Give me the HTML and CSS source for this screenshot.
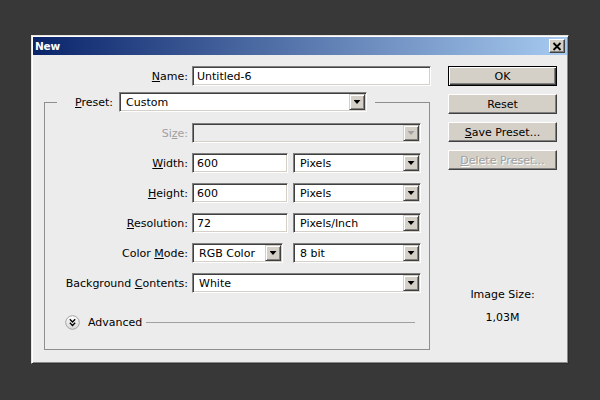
FILE: index.html
```html
<!DOCTYPE html>
<html>
<head>
<meta charset="utf-8">
<link rel="stylesheet" href="styles.css">
</head>
<body>
<div class="dialog">
  <div class="titlebar">
    <span class="title">New</span>
    <span class="close"><svg width="10" height="9" viewBox="0 0 10 9"><path d="M1.5 1L8.5 8M8.5 1L1.5 8" stroke="#000" stroke-width="1.8" fill="none"/></svg></span>
  </div>
  <div class="body">
    <div class="main">
      <div class="row">
        <span class="lbl name-lbl"><u>N</u>ame:</span>
        <div class="field input w-name">Untitled-6</div>
      </div>
      <fieldset class="group">
        <legend class="legend">
          <span class="preset-lbl"><u>P</u>reset:</span>
          <div class="field select w-preset"><span class="val">Custom</span><span class="drop"><i class="arrow"></i></span></div>
        </legend>
        <div class="row">
          <span class="lbl disabled">Si<u>z</u>e:</span>
          <div class="field select off w-full"><span class="val"></span><span class="drop"><i class="arrow"></i></span></div>
        </div>
        <div class="row">
          <span class="lbl"><u>W</u>idth:</span>
          <div class="field input w-num">600</div>
          <div class="field select w-unit gap5"><span class="val">Pixels</span><span class="drop"><i class="arrow"></i></span></div>
        </div>
        <div class="row">
          <span class="lbl"><u>H</u>eight:</span>
          <div class="field input w-num">600</div>
          <div class="field select w-unit gap5"><span class="val">Pixels</span><span class="drop"><i class="arrow"></i></span></div>
        </div>
        <div class="row">
          <span class="lbl"><u>R</u>esolution:</span>
          <div class="field input w-num">72</div>
          <div class="field select w-unit gap5"><span class="val">Pixels/Inch</span><span class="drop"><i class="arrow"></i></span></div>
        </div>
        <div class="row">
          <span class="lbl">Color <u>M</u>ode:</span>
          <div class="field select w-mode"><span class="val">RGB Color</span><span class="drop"><i class="arrow"></i></span></div>
          <div class="field select w-unit gap10"><span class="val">8 bit</span><span class="drop"><i class="arrow"></i></span></div>
        </div>
        <div class="row">
          <span class="lbl">Background <u>C</u>ontents:</span>
          <div class="field select w-full"><span class="val">White</span><span class="drop"><i class="arrow"></i></span></div>
        </div>
        <div class="row adv">
          <svg class="adv-icon" width="15" height="15" viewBox="0 0 15 15">
            <defs><linearGradient id="ag" x1="0" y1="0" x2="0" y2="1"><stop offset="0" stop-color="#ffffff"/><stop offset="1" stop-color="#d6d6d6"/></linearGradient></defs>
            <circle cx="7.5" cy="7.5" r="6.8" fill="url(#ag)" stroke="#a4a4a4" stroke-width="1"/>
            <path d="M4.8 4.3L7.5 7L10.2 4.3M4.8 7.8L7.5 10.5L10.2 7.8" fill="none" stroke="#000" stroke-width="1.3"/>
          </svg>
          <span class="adv-text">Advanced</span>
          <span class="adv-line"></span>
        </div>
      </fieldset>
    </div>
    <div class="side">
      <div class="btn btn-default">OK</div>
      <div class="btn">Reset</div>
      <div class="btn"><span><u>S</u>ave Preset...</span></div>
      <div class="btn btn-off"><span><u>D</u>elete Preset...</span></div>
      <div class="imgsize">
        <div>Image Size:</div>
        <div class="imgsize-val">1,03M</div>
      </div>
    </div>
  </div>
</div>
</body>
</html>
```
FILE: styles.css
```css
* { box-sizing: border-box; }
html, body { margin: 0; padding: 0; }
body {
  background: #383838;
  width: 600px;
  height: 400px;
  overflow: hidden;
  font-family: "DejaVu Sans", "Liberation Sans", sans-serif;
  font-size: 11px;
  color: #000;
}
.dialog {
  margin: 35px 0 0 31px;
  width: 538px;
  height: 329px;
  background: #ececec;
  border: 1px solid;
  border-color: #e6e4de #2e2e2e #2e2e2e #e6e4de;
  padding: 1px;
  box-shadow: inset 1px 1px #ffffff, inset -1px -1px #8a8a8a;
  display: flex;
  flex-direction: column;
}
.titlebar {
  height: 18px;
  flex: none;
  background: linear-gradient(to right, #0a246a, #a6caf0);
  display: flex;
  align-items: center;
  justify-content: space-between;
  padding: 0 2px 0 2px;
}
.title {
  color: #fff;
  font-weight: bold;
  font-size: 10.5px;
  letter-spacing: -0.2px;
}
.close {
  width: 16px;
  height: 14px;
  background: #d4d0c8;
  border: 1px solid;
  border-color: #ffffff #404040 #404040 #ffffff;
  box-shadow: inset -1px -1px #808080;
  display: flex;
  align-items: center;
  justify-content: center;
}
.body {
  display: flex;
  padding: 11px 10px 0 11px;
  gap: 17px;
}
.main { width: 387px; flex: none; }
.side { width: 109px; flex: none; display: flex; flex-direction: column; gap: 8px; }

.row { display: flex; align-items: center; height: 20px; }
.group .row + .row { margin-top: 10px; }
.group .row.adv { margin-top: 19px; }

.lbl {
  width: 143px;
  margin-right: 4px;
  text-align: right;
  white-space: nowrap;
  flex: none;
}
.name-lbl { width: 144px; }
.disabled { color: #a0a0a0; }

.field {
  height: 20px;
  flex: none;
  border: 1px solid;
  border-color: #808080 #ffffff #ffffff #808080;
  box-shadow: inset 1px 1px #404040, inset -1px -1px #d4d0c8;
  background: #fff;
  display: flex;
  align-items: center;
  white-space: nowrap;
}
.input { padding-left: 4px; }
.select .val { flex: 1; padding-left: 6px; }
.select.off { background: #ececec; }
.drop {
  width: 16px;
  height: 16px;
  margin-right: 1px;
  flex: none;
  background: #d4d0c8;
  border: 1px solid;
  border-color: #d4d0c8 #404040 #404040 #d4d0c8;
  box-shadow: inset 1px 1px #ffffff, inset -1px -1px #808080;
  display: flex;
  align-items: center;
  justify-content: center;
}
.arrow {
  display: block;
  width: 7px;
  height: 4px;
  background: #000;
  clip-path: polygon(0 0, 100% 0, 50% 100%);
}
.off .arrow { background: #a0a0a0; }

.w-name { width: 239px; }
.w-preset { width: 248px; }
.w-full { width: 229px; }
.w-num { width: 96px; }
.w-unit { width: 128px; }
.w-mode { width: 91px; }
.gap5 { margin-left: 5px; }
.gap10 { margin-left: 10px; }

.group {
  width: 386px;
  margin: 6px 0 0 0;
  padding: 11px 0 17px 0;
  min-width: 0;
  border: 1px solid #8e8e8e;
}
.legend {
  margin-left: 12px;
  padding: 0 8px 0 18px;
  display: flex;
  align-items: center;
}
.preset-lbl { width: 40px; margin-right: 4px; white-space: nowrap; }

.adv-icon { margin-left: 20px; flex: none; }
.adv-text { margin-left: 8px; }
.adv-line { flex: 1; height: 1px; background: #a0a0a0; margin: 0 14px 0 4px; }

.btn {
  height: 20px;
  display: flex;
  align-items: center;
  justify-content: center;
  background: #d4d0c8;
  border: 1px solid;
  border-color: #ffffff #404040 #404040 #ffffff;
  box-shadow: inset -1px -1px #808080;
  white-space: nowrap;
}
.btn-default {
  border: 1px solid #000;
  box-shadow: inset 1px 1px #ffffff, inset -1px -1px #404040, inset -2px -2px #808080;
}
.btn-off { color: #a0a0a0; text-shadow: 1px 1px #ffffff; }

.imgsize {
  margin-top: 110px;
  text-align: center;
  line-height: 14px;
}
.imgsize-val { margin-top: 9px; }
```
